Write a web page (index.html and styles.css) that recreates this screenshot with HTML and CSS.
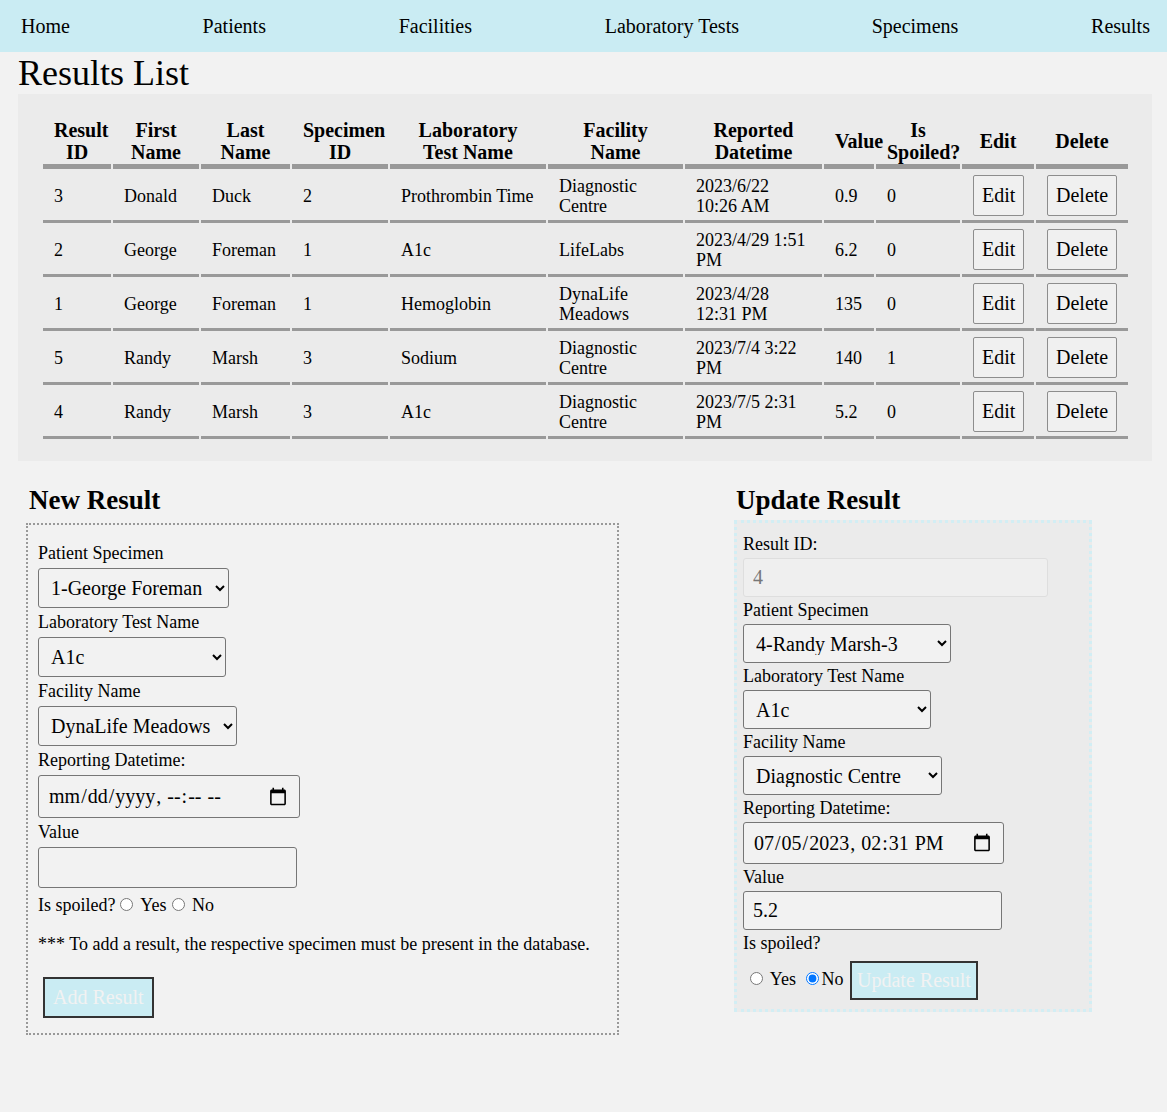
FILE: index.html
```html
<!DOCTYPE html>
<html lang="en">
<head>
<meta charset="utf-8">
<title>Results List</title>
<link rel="stylesheet" href="styles.css">
</head>
<body>
<nav class="topnav">
  <a class="nav-link" href="#">Home</a>
  <a class="nav-link" href="#">Patients</a>
  <a class="nav-link" href="#">Facilities</a>
  <a class="nav-link" href="#">Laboratory Tests</a>
  <a class="nav-link" href="#">Specimens</a>
  <a class="nav-link" href="#">Results</a>
</nav>
<main class="page">
  <h1 class="page-title">Results List</h1>
  <div class="table-wrap">
    <table class="results">
      <thead>
        <tr>
          <th class="c-id">Result ID</th>
          <th class="c-first">First Name</th>
          <th class="c-last">Last Name</th>
          <th class="c-spec">Specimen ID</th>
          <th class="c-test">Laboratory Test Name</th>
          <th class="c-fac">Facility Name</th>
          <th class="c-date">Reported Datetime</th>
          <th class="c-val">Value</th>
          <th class="c-spoil">Is Spoiled?</th>
          <th class="c-edit">Edit</th>
          <th class="c-del">Delete</th>
        </tr>
      </thead>
      <tbody>
        <tr>
          <td>3</td><td>Donald</td><td>Duck</td><td>2</td><td>Prothrombin Time</td><td>Diagnostic Centre</td><td>2023/6/22 10:26 AM</td><td>0.9</td><td>0</td>
          <td><button class="row-btn">Edit</button></td><td><button class="row-btn">Delete</button></td>
        </tr>
        <tr>
          <td>2</td><td>George</td><td>Foreman</td><td>1</td><td>A1c</td><td>LifeLabs</td><td>2023/4/29 1:51 PM</td><td>6.2</td><td>0</td>
          <td><button class="row-btn">Edit</button></td><td><button class="row-btn">Delete</button></td>
        </tr>
        <tr>
          <td>1</td><td>George</td><td>Foreman</td><td>1</td><td>Hemoglobin</td><td>DynaLife Meadows</td><td>2023/4/28 12:31 PM</td><td>135</td><td>0</td>
          <td><button class="row-btn">Edit</button></td><td><button class="row-btn">Delete</button></td>
        </tr>
        <tr>
          <td>5</td><td>Randy</td><td>Marsh</td><td>3</td><td>Sodium</td><td>Diagnostic Centre</td><td>2023/7/4 3:22 PM</td><td>140</td><td>1</td>
          <td><button class="row-btn">Edit</button></td><td><button class="row-btn">Delete</button></td>
        </tr>
        <tr>
          <td>4</td><td>Randy</td><td>Marsh</td><td>3</td><td>A1c</td><td>Diagnostic Centre</td><td>2023/7/5 2:31 PM</td><td>5.2</td><td>0</td>
          <td><button class="row-btn">Edit</button></td><td><button class="row-btn">Delete</button></td>
        </tr>
      </tbody>
    </table>
  </div>

  <section class="forms">
    <div class="new-col">
      <h2 class="new-title">New Result</h2>
      <form class="new-form">
        <label class="field-label">Patient Specimen</label>
        <select class="ctl w-spec-new"><option>1-George Foreman</option></select>
        <label class="field-label">Laboratory Test Name</label>
        <select class="ctl w-test"><option>A1c</option></select>
        <label class="field-label">Facility Name</label>
        <select class="ctl w-fac"><option>DynaLife Meadows</option></select>
        <label class="field-label">Reporting Datetime:</label>
        <input class="ctl dt w-dt" type="datetime-local">
        <label class="field-label">Value</label>
        <input class="ctl txt w-val" type="text">
        <div class="spoiled">Is spoiled?<input class="radio" type="radio" name="sp-new"> Yes<input class="radio" type="radio" name="sp-new"> No</div>
        <p class="note">*** To add a result, the respective specimen must be present in the database.</p>
        <button class="submit-btn add-btn" type="button">Add Result</button>
      </form>
    </div>
    <div class="upd-col">
      <h2 class="upd-title">Update Result</h2>
      <form class="upd-form">
        <label class="field-label">Result ID:</label>
        <input class="ctl txt id-input" type="text" value="4" disabled>
        <label class="field-label">Patient Specimen</label>
        <select class="ctl w-spec-upd"><option>4-Randy Marsh-3</option></select>
        <label class="field-label">Laboratory Test Name</label>
        <select class="ctl w-test"><option>A1c</option></select>
        <label class="field-label">Facility Name</label>
        <select class="ctl w-fac"><option>Diagnostic Centre</option></select>
        <label class="field-label">Reporting Datetime:</label>
        <input class="ctl dt w-dt-upd" type="datetime-local" value="2023-07-05T14:31">
        <label class="field-label">Value</label>
        <input class="ctl txt w-val" type="text" value="5.2">
        <label class="field-label">Is spoiled?</label>
        <div class="radio-row"><input class="radio first-radio" type="radio" name="sp-upd"> Yes <input class="radio" type="radio" name="sp-upd" checked>No <button class="submit-btn upd-btn" type="button">Update Result</button></div>
      </form>
    </div>
  </section>
</main>
</body>
</html>
```
FILE: styles.css
```css
* {
  box-sizing: border-box;
}

html, body {
  margin: 0;
  padding: 0;
}

body {
  background: #f2f2f2;
  color: #000;
  font-family: "Liberation Serif", "Times New Roman", serif;
  font-size: 18px;
  min-height: 1112px;
}

.topnav {
  display: flex;
  justify-content: space-between;
  align-items: center;
  height: 52px;
  padding: 0 17px 0 21px;
  background: #caecf3;
}

.nav-link {
  font-size: 20px;
  color: #000;
  text-decoration: none;
}

.page {
  padding: 0 15px 0 18px;
}

.page-title {
  margin: 0;
  font-size: 36px;
  font-weight: normal;
  line-height: 42px;
}

.table-wrap {
  background: #ebebeb;
  padding: 19px 22px 20px 23px;
}

.results {
  width: 100%;
  table-layout: fixed;
  border-spacing: 2px;
}

.results th {
  font-size: 20px;
  font-weight: bold;
  text-align: center;
  padding: 4px 11px 1px 11px;
  border-bottom: 5px solid #999;
  line-height: 22px;
}

.results td {
  text-align: left;
  padding: 4px 11px;
  border-bottom: 3px solid #999;
  line-height: 20px;
}

.c-id { width: 68px; }
.c-first { width: 86px; }
.c-last { width: 89px; }
.c-spec { width: 96px; }
.c-test { width: 156px; }
.c-fac { width: 135px; }
.c-date { width: 137px; }
.c-val { width: 50px; }
.c-spoil { width: 84px; }
.c-edit { width: 72px; }
.c-del { width: 92px; }

.row-btn {
  display: block;
  font-family: "Liberation Serif", "Times New Roman", serif;
  font-size: 20px;
  line-height: 23px;
  height: 41px;
  padding: 0 8px;
  background: #f0f0f0;
  border: 1px solid #8d8d8d;
  border-radius: 2px;
  color: #000;
}

.forms {
  display: flex;
  align-items: flex-start;
  padding-left: 8px;
  margin-top: 24px;
}

.new-col {
  width: 593px;
}

.upd-col {
  width: 358px;
  margin-left: 115px;
}

.new-title,
.upd-title {
  margin: 0;
  font-size: 27px;
  line-height: 31px;
  font-weight: bold;
}

.new-title {
  margin: 0 0 7px 3px;
}

.upd-title {
  margin: 0 0 4px 2px;
}

.new-form {
  border: 2px dotted #999;
  padding: 18px 10px 15px 10px;
}

.upd-form {
  border: 3px dotted #d2eef4;
  background: #ebebeb;
  padding: 11px 6px 9px 6px;
}

.field-label {
  display: block;
  line-height: 21px;
}

.ctl {
  display: block;
  font-family: "Liberation Serif", "Times New Roman", serif;
  font-size: 20px;
  color: #000;
  background: #f2f2f2;
  border: 1px solid #767676;
  border-radius: 3px;
  padding: 7px 8px;
  height: 40px;
  margin: 4px 0;
}

.upd-form .ctl {
  margin: 3px 0;
  height: 39px;
}

.txt,
.dt {
  padding: 7px 9px;
}

.w-spec-new { width: 191px; }
.w-spec-upd { width: 208px; }
.w-test { width: 188px; }
.w-fac { width: 199px; }
.w-dt { width: 262px; }
.new-form .w-dt { height: 43px; }
.w-dt-upd { width: 261px; }
.upd-form .w-dt-upd { height: 42px; }
.w-val { width: 259px; }
.new-form .w-val { height: 41px; }

.id-input {
  width: 305px;
  background: #efefef;
  border: 1px solid #dedede;
  color: #777;
}

.spoiled {
  padding-top: 3px;
  line-height: 21px;
}

.radio {
  margin: 3px 3px 0 5px;
}

.note {
  margin: 18px 0 22px 0;
  line-height: 21px;
}

.submit-btn {
  font-family: "Liberation Serif", "Times New Roman", serif;
  font-size: 20px;
  line-height: 23px;
  color: #f2f2f2;
  background: #caecf3;
  border: 2px solid #333;
  border-radius: 0;
}

.add-btn {
  display: block;
  margin-left: 5px;
  padding: 7px 8px;
}

.radio-row {
  margin-top: 7px;
}

.first-radio {
  margin-left: 7px;
}

.upd-btn {
  vertical-align: middle;
  padding: 6px 5px;
  margin-left: 2px;
}
```
